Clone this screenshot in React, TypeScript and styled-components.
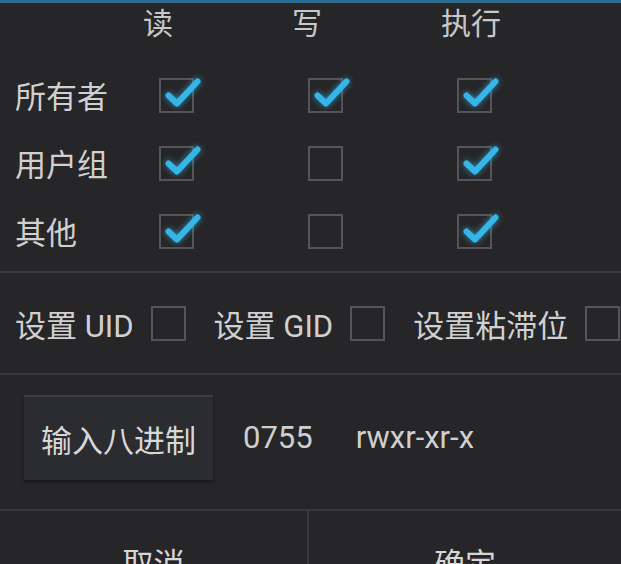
import React from 'react';
import styled, { createGlobalStyle } from 'styled-components';

const Global = createGlobalStyle`
  html, body {
    margin: 0;
    padding: 0;
    overflow: hidden;
    background: #262528;
  }
  body {
    font-family: Roboto, "Noto Sans CJK SC", sans-serif;
    color: #d2d2d2;
  }
`;

const FONT = `Roboto, "Noto Sans CJK SC", sans-serif`;

const Dialog = styled.div`
  width: 621px;
  height: 564px;
  display: flex;
  flex-direction: column;
  background: #262528;
  overflow: hidden;
`;

const TopLine = styled.div`
  flex: none;
  height: 3px;
  background: #2c6b8b;
`;

const PermGrid = styled.div`
  flex: none;
  display: grid;
  grid-template-columns: 143px 149px 149px 1fr;
  grid-template-rows: 58px repeat(3, 68px);
  align-items: center;
  padding-bottom: 6px;
`;

const ColHead = styled.div`
  align-self: start;
  line-height: 42px;
  font-size: 30px;
  color: #c8c8c8;
`;

const RowLabel = styled.div`
  padding-left: 15px;
  padding-top: 5px;
  font-size: 31px;
  line-height: 1;
  color: #d0d0d0;
`;

const Divider = styled.div`
  flex: none;
  height: 2px;
  background: #38373b;
`;

const Box = styled.span<{ $ml?: number }>`
  position: relative;
  display: block;
  flex: none;
  box-sizing: border-box;
  width: 35px;
  height: 35px;
  border: 2px solid #555458;
  margin-left: ${(p) => p.$ml ?? 0}px;
`;

const Tick = styled.svg`
  position: absolute;
  left: -2px;
  top: -2px;
  overflow: visible;
  filter: drop-shadow(0 0 3px rgba(51, 181, 229, 0.75));
`;

const CheckBox: React.FC<{ checked?: boolean; ml?: number }> = ({ checked, ml }) => (
  <Box $ml={ml}>
    {checked && (
      <Tick width="35" height="35" viewBox="0 0 35 35">
        <path
          d="M9.5 17.5 L18 25.5 L38.5 3.5"
          fill="none"
          stroke="#35b6e8"
          strokeWidth="6"
          strokeLinecap="round"
          strokeLinejoin="round"
        />
      </Tick>
    )}
  </Box>
);

const SpecialRow = styled.div`
  flex: none;
  height: 100px;
  display: flex;
  align-items: center;
  gap: 28px;
  padding-left: 15px;
  white-space: nowrap;
`;

const SpecialItem = styled.div`
  display: flex;
  align-items: center;
  gap: 17px;
  font-size: 31px;
  line-height: 1;
  color: #d0d0d0;
`;

const SpecialText = styled.span`
  padding-top: 6px;
`;

const OctalRow = styled.div`
  flex: none;
  height: 134px;
  box-sizing: border-box;
  padding: 20px 0 29px 24px;
  display: flex;
  align-items: center;
  white-space: nowrap;
`;

const OctalButton = styled.button`
  flex: none;
  width: 189px;
  height: 85px;
  padding: 0;
  background: #2a2c30;
  border: none;
  border-top: 2px solid #3a3c40;
  box-shadow: 0 2px 3px rgba(0, 0, 0, 0.4);
  color: #d8d8d8;
  font-family: ${FONT};
  font-size: 31px;
`;

const Value = styled.span<{ $ml: number }>`
  margin-left: ${(p) => p.$ml}px;
  font-size: 31px;
  color: #cfcfcf;
`;

const Actions = styled.div`
  flex: none;
  display: grid;
  grid-template-columns: 307px 2px 1fr;
  height: 100px;
`;

const ActionButton = styled.button`
  background: transparent;
  border: none;
  padding: 0;
  color: #d6d6d6;
  font-family: ${FONT};
  font-size: 31px;
`;

const VDivider = styled.div`
  background: #38373b;
`;

const rows: { label: string; perms: boolean[] }[] = [
  { label: '所有者', perms: [true, true, true] },
  { label: '用户组', perms: [true, false, true] },
  { label: '其他', perms: [true, false, true] },
];

export default function App() {
  return (
    <>
      <Global />
      <Dialog>
        <TopLine />
        <PermGrid>
          <div />
          <ColHead>读</ColHead>
          <ColHead>写</ColHead>
          <ColHead>执行</ColHead>
          {rows.map((r) => (
            <React.Fragment key={r.label}>
              <RowLabel>{r.label}</RowLabel>
              {r.perms.map((p, i) => (
                <div key={i}>
                  <CheckBox checked={p} ml={16} />
                </div>
              ))}
            </React.Fragment>
          ))}
        </PermGrid>
        <Divider />
        <SpecialRow>
          <SpecialItem>
            <SpecialText>设置 UID</SpecialText>
            <CheckBox />
          </SpecialItem>
          <SpecialItem>
            <SpecialText>设置 GID</SpecialText>
            <CheckBox />
          </SpecialItem>
          <SpecialItem>
            <SpecialText>设置粘滞位</SpecialText>
            <CheckBox />
          </SpecialItem>
        </SpecialRow>
        <Divider />
        <OctalRow>
          <OctalButton>输入八进制</OctalButton>
          <Value $ml={30}>0755</Value>
          <Value $ml={43}>rwxr-xr-x</Value>
        </OctalRow>
        <Divider />
        <Actions>
          <ActionButton>取消</ActionButton>
          <VDivider />
          <ActionButton>确定</ActionButton>
        </Actions>
      </Dialog>
    </>
  );
}
